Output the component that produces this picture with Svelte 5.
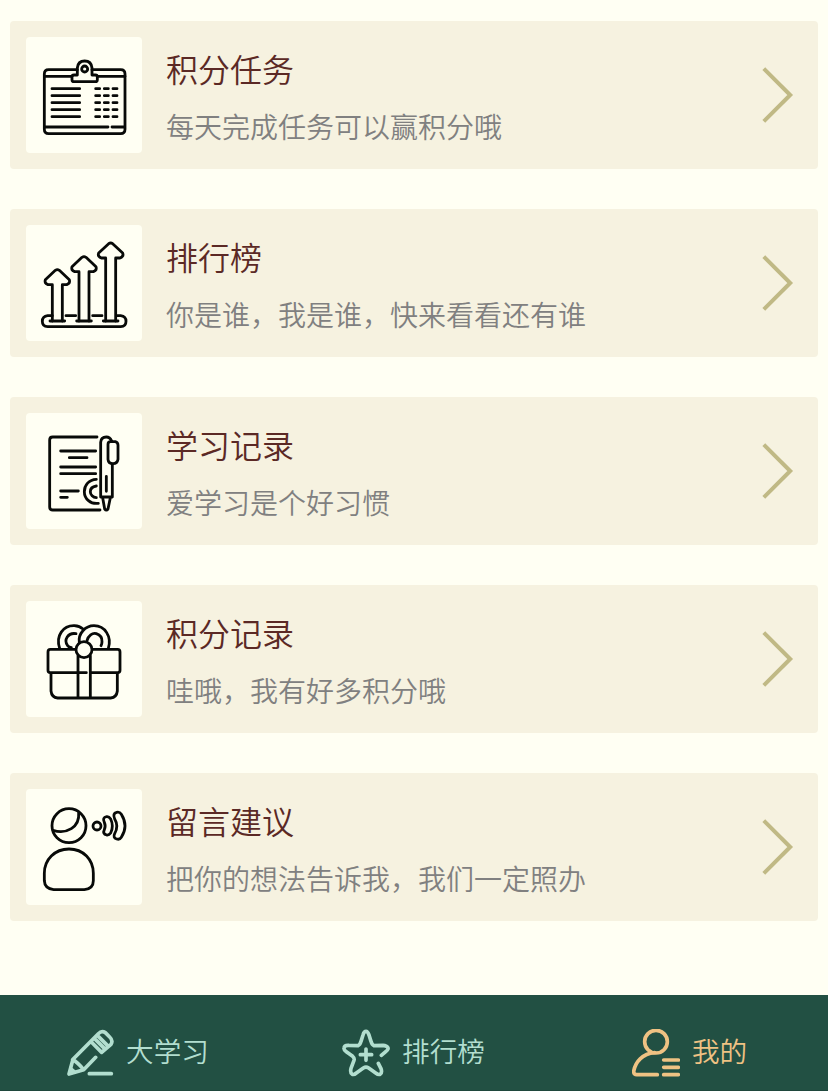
<script lang="ts">
  type Icon = 'board' | 'arrows' | 'notes' | 'gift' | 'voice';

  const entries: { icon: Icon; title: string; desc: string }[] = [
    { icon: 'board', title: '积分任务', desc: '每天完成任务可以赢积分哦' },
    { icon: 'arrows', title: '排行榜', desc: '你是谁，我是谁，快来看看还有谁' },
    { icon: 'notes', title: '学习记录', desc: '爱学习是个好习惯' },
    { icon: 'gift', title: '积分记录', desc: '哇哦，我有好多积分哦' },
    { icon: 'voice', title: '留言建议', desc: '把你的想法告诉我，我们一定照办' },
  ];

  const tabs = [
    { id: 'study', label: '大学习' },
    { id: 'rank', label: '排行榜' },
    { id: 'mine', label: '我的' },
  ];

  let active = $state('mine');
</script>

<main>
  {#each entries as entry (entry.icon)}
    <div class="card">
      <div class="thumb">
        <svg viewBox="18 15 348 348">
          {#if entry.icon === 'board'}
            <path d="M172 113H86Q73 113 73 126V292Q73 305 86 305H302Q315 305 315 292V126Q315 113 302 113H216" />
            <path d="M73 133H156M232 133H315M76 285H264M276 285H312" />
            <path d="M172 129V108Q174 87 194 87Q214 87 216 108V129H226Q232 129 232 135V143Q232 149 226 149H162Q156 149 156 143V135Q156 129 162 129Z" />
            <circle cx="194" cy="111" r="9" />
            {#each [170, 191, 212, 233, 254] as y (y)}
              <path d="M96 {y}H179M227 {y}H239M253 {y}H265M279 {y}H291" />
            {/each}
          {:else if entry.icon === 'arrows'}
            <path d="M97 287H83Q67 289 67 304Q67 320 83 320H302Q318 320 318 304Q318 289 302 287H290M138 287H167M218 287H246" />
            {#each [[112, 150], [192, 111], [272, 70]] as [x, y] (x)}
              <path d="M{x - 15} 303V{y + 44}H{x - 28}Q{x - 40} {y + 39} {x - 36} {y + 29}L{x - 6} {y + 1}Q{x} {y - 3} {x + 6} {y + 1}L{x + 36} {y + 29}Q{x + 40} {y + 39} {x + 28} {y + 44}H{x + 15}V303" />
              <path d="M{x - 22} 303H{x + 22}" />
            {/each}
          {:else if entry.icon === 'notes'}
            <path d="M231 87H98Q89 87 89 96V297Q89 306 98 306H240" />
            <path d="M122 129H227M148 149H201M122 177H227M122 197H227M122 249H175M122 268H142" />
            <path d="M229 214C207 215 193 231 193 251C193 273 212 289 235 286M229 234C217 236 211 242 211 251C211 260 219 269 229 269" />
            <path d="M242 267V103Q243 87 259 87Q270 87 275 99M277 169V267H242M248 269L254 303Q259 309 264 303L271 269M259 205V250" />
            <path d="M272 101H286Q294 103 294 112V154Q292 167 279 167Q265 167 264 154V109Q264 101 272 101Z" />
          {:else if entry.icon === 'gift'}
            <path d="M119 157C106 119 130 88 163 89Q179 90 189 99M168 113C144 109 130 132 143 149Q147 153 154 155M178 139C174 113 196 89 222 89C255 89 276 122 265 157M201 134C205 118 217 110 229 113Q247 119 246 137Q246 144 243 149" />
            <path d="M167 160H91Q84 160 84 168V223Q84 230 91 230H199M212 230H293Q300 230 300 223V168Q300 160 293 160H217" />
            <path d="M93 232V285Q95 304 113 306H272Q290 304 292 285V232M174 179V306M211 179V306" />
            <circle cx="192" cy="161" r="24" />
          {:else}
            <circle cx="147" cy="125" r="51" />
            <path d="M99 139C139 151 180 131 176 85" />
            <path d="M101 317H193Q220 314 220 290V268C220 227 190 195 147 195C104 195 73 227 73 268V290Q74 314 101 317Z" />
            <circle cx="231" cy="126" r="12" />
            <path d="M253 115Q246 100 260 98Q267 97 272 105Q282 126 272 147Q267 154 260 153Q247 150 253 137Q258 126 253 115Z" />
            <path d="M284 105Q277 88 290 85Q299 83 304 91Q326 126 304 160Q299 168 290 165Q278 161 284 149Q297 126 284 105Z" />
          {/if}
        </svg>
      </div>
      <div class="text">
        <div class="title">{entry.title}</div>
        <div class="desc">{entry.desc}</div>
      </div>
      <svg class="chevron" viewBox="0 0 32 58">
        <path d="M1.8 2.6L28.2 29L1.8 55.4" />
      </svg>
    </div>
  {/each}
</main>

<nav>
  {#each tabs as tab (tab.id)}
    <button class:active={active === tab.id} onclick={() => (active = tab.id)}>
      {#if tab.id === 'study'}
        <svg viewBox="48 132 144 144">
          <path d="M137 217L101 254L57 267L69 223L145 146Q155 136 166 143L179 156Q190 166 183 178L155 202L124 171M68 224Q82 231 100 253M133 160L163 190M142 151L172 181" />
          <path class="fill" d="M60 242L82 261L54 270Z" />
          <path d="M118 266H184" />
        </svg>
      {:else if tab.id === 'rank'}
        <svg viewBox="36 132 144 144">
          <path d="M154 211L168 199Q177 192 173 187Q170 182 159 181L132 182Q126 180 123 169L117 150Q113 139 108 139Q102 139 99 150L93 169Q90 180 84 182L57 181Q43 180 42 189Q41 194 49 200L68 214Q74 219 72 226L63 250Q60 263 66 267Q71 271 79 264L100 249Q108 244 116 249L137 264Q146 271 151 267Q157 263 153 251L145 235" />
          <path d="M108 192V226M91 209H125" />
        </svg>
      {:else}
        <svg viewBox="66 132 144 144">
          <circle cx="138" cy="170" r="34" />
          <path d="M134 203C97 206 76 231 71 259Q71 269 80 269H142M161 225H205M161 247H205M161 269H205" />
        </svg>
      {/if}
      <span>{tab.label}</span>
    </button>
  {/each}
</nav>

<style>
  :global(body) {
    background: #fffff3;
    font-family: 'Noto Sans CJK SC', sans-serif;
    overflow: hidden;
  }
  main {
    display: flex;
    flex-direction: column;
    gap: 40px;
    height: 995px;
    padding: 21px 10px 0;
    box-sizing: border-box;
  }
  .card {
    display: flex;
    align-items: center;
    height: 148px;
    padding: 0 24px 0 16px;
    box-sizing: border-box;
    border-radius: 4px;
    background: #f6f2e0;
  }
  .thumb {
    width: 116px;
    height: 116px;
    border-radius: 4px;
    background: #fffff3;
  }
  svg {
    display: block;
    fill: none;
    stroke: currentColor;
    stroke-linecap: round;
    stroke-linejoin: round;
  }
  .thumb svg {
    color: #080a08;
    stroke-width: 8.4;
  }
  .text {
    flex: 1;
    margin-left: 24px;
    padding-top: 4px;
    font-weight: 350;
  }
  .title {
    color: #5b2925;
    font-size: 32px;
    line-height: 58px;
  }
  .desc {
    color: #808080;
    font-size: 28px;
    line-height: 58px;
  }
  .chevron {
    width: 32px;
    height: 58px;
    color: #c0b985;
    stroke-width: 4;
    stroke-linecap: butt;
    stroke-linejoin: miter;
  }
  nav {
    display: grid;
    grid-template-columns: repeat(3, 1fr);
    height: 96px;
    box-sizing: border-box;
    border-bottom: 1px solid #1f483d;
    background: #225043;
  }
  button {
    display: flex;
    align-items: center;
    justify-content: center;
    gap: 12px;
    height: 48px;
    margin-top: 34px;
    padding: 0 1px 0 0;
    border: 0;
    background: none;
    color: #b2decf;
    font: 350 27.6px/48px 'Noto Sans CJK SC', sans-serif;
    cursor: pointer;
  }
  button.active {
    color: #efc283;
  }
  button svg {
    width: 48px;
    height: 48px;
    stroke-width: 11;
  }
  button span {
    margin-bottom: 7px;
  }
  button .fill {
    fill: currentColor;
    stroke: none;
  }
</style>
